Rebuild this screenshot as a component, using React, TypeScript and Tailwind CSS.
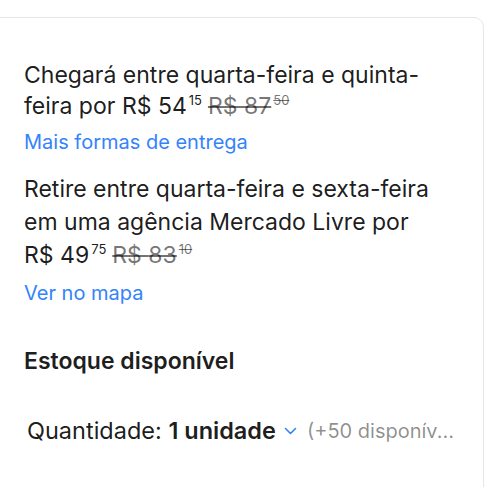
import React from "react";

const font = { fontFamily: '"Inter", "Noto Sans", sans-serif' };

function Price({ whole, cents }: { whole: string; cents: string }) {
  return (
    <span className="whitespace-nowrap">
      R$&nbsp;{whole}
      <sup className="text-[13px] relative -top-[9px] ml-[2px]">{cents}</sup>
    </span>
  );
}

function OldPrice({ whole, cents }: { whole: string; cents: string }) {
  return (
    <span className="whitespace-nowrap text-[rgba(0,0,0,0.55)] ml-[6px]">
      <span className="line-through">R$&nbsp;{whole}</span>
      <sup className="text-[13px] relative -top-[9px] ml-[2px] line-through">{cents}</sup>
    </span>
  );
}

export default function App() {
  return (
    <div className="w-[500px] h-[487px] bg-white overflow-hidden pt-[17px]" style={font}>
      <div className="-ml-[10px] w-[494px] h-[520px] border border-[#e6e6e6] rounded-[10px] pl-[33px] pt-[42px]">
        <div className="text-[23px] leading-[31px] text-[rgba(0,0,0,0.9)]">
          <p className="whitespace-nowrap">Chegará entre quarta-feira e quinta-</p>
          <p className="whitespace-nowrap">
            feira por <Price whole="54" cents="15" />
            <OldPrice whole="87" cents="50" />
          </p>
        </div>
        <a className="block mt-[6px] text-[20px] leading-[28px] text-[#3483fa]">Mais formas de entrega</a>

        <div className="mt-[17px] text-[23px] leading-[33px] text-[rgba(0,0,0,0.9)]">
          <p className="whitespace-nowrap">Retire entre quarta-feira e sexta-feira</p>
          <p className="whitespace-nowrap">em uma agência Mercado Livre por</p>
          <p className="whitespace-nowrap">
            <Price whole="49" cents="75" />
            <OldPrice whole="83" cents="10" />
          </p>
        </div>
        <a className="block mt-[7px] text-[20px] leading-[28px] text-[#3483fa]">Ver no mapa</a>

        <h3 className="mt-[40px] text-[23px] leading-[28px] font-semibold text-[rgba(0,0,0,0.9)]">
          Estoque disponível
        </h3>

        <div className="mt-[42px] ml-[3px] flex items-center text-[23.5px] leading-[28px] whitespace-nowrap">
          <span className="text-[rgba(0,0,0,0.9)]">Quantidade:&nbsp;</span>
          <span className="font-semibold text-[rgba(0,0,0,0.9)]">1 unidade</span>
          <svg className="ml-[8px] shrink-0" width="13" height="8" viewBox="0 0 13 8" fill="none">
            <path d="M1.5 1.5l5 5 5-5" stroke="#3483fa" strokeWidth="1.6" strokeLinecap="round" strokeLinejoin="round" />
          </svg>
          <span className="ml-[10px] text-[20px] text-[rgba(0,0,0,0.45)]">(+50 disponív...</span>
        </div>
      </div>
    </div>
  );
}
